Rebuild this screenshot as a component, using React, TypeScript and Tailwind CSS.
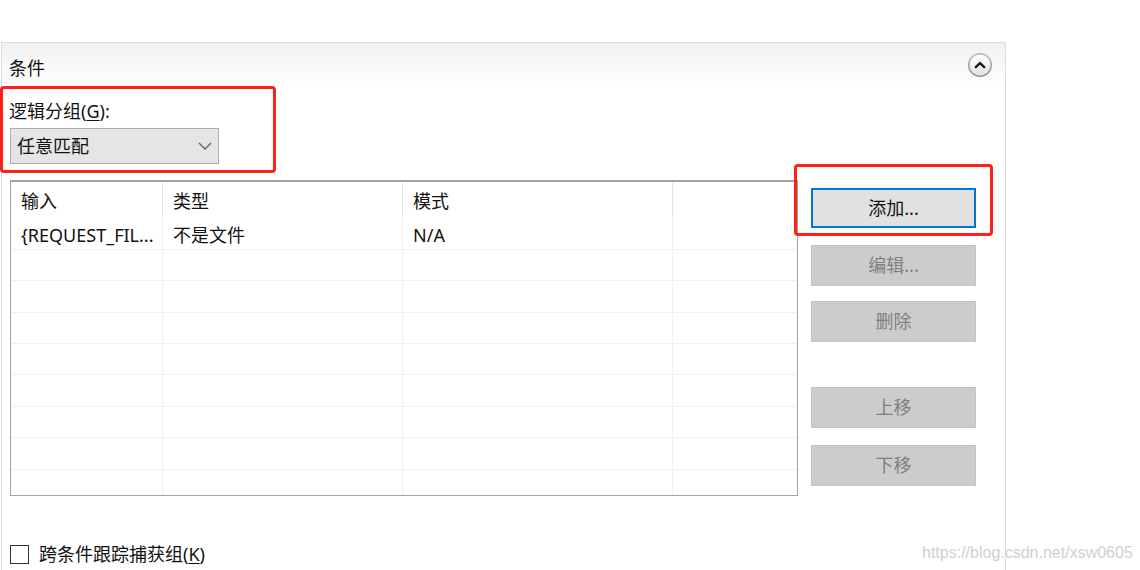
import React from "react";

const font = {
  fontFamily: '"Noto Sans", "Noto Sans CJK SC", sans-serif',
};

const rowHeights = [31, 32, 31, 31, 32, 31, 32];

const columns = [
  "w-[152px]",
  "w-[240px]",
  "w-[270px]",
  "flex-1",
];

function CollapseButton() {
  return (
    <svg width="26" height="26" viewBox="0 0 26 26">
      <defs>
        <linearGradient id="ring" x1="0" y1="0" x2="0" y2="1">
          <stop offset="0" stopColor="#b9b9b9" />
          <stop offset="1" stopColor="#8f8f8f" />
        </linearGradient>
        <linearGradient id="face" x1="0" y1="0" x2="0" y2="1">
          <stop offset="0" stopColor="#ffffff" />
          <stop offset="1" stopColor="#e2e2e2" />
        </linearGradient>
      </defs>
      <circle cx="13" cy="13" r="12" fill="url(#ring)" />
      <circle cx="13" cy="13" r="10.5" fill="url(#face)" />
      <path d="M8.8 15.2 L13 11 L17.2 15.2" fill="none" stroke="#1a1a1a" strokeWidth="2.4" strokeLinecap="round" strokeLinejoin="round" />
    </svg>
  );
}

function SideButton({ label, active }: { label: string; active?: boolean }) {
  return (
    <div
      className={
        active
          ? "flex h-[40px] w-[165px] items-center justify-center border-2 border-[#0078d7] bg-[#e1e1e1] text-[18px] text-[#111]"
          : "flex h-[41px] w-[165px] items-center justify-center border border-[#c4c4c4] bg-[#cccccc] text-[18px] text-[#7f7f7f]"
      }
    >
      {label}
    </div>
  );
}

export default function App() {
  return (
    <div className="relative h-[570px] w-[1140px] overflow-hidden bg-white pl-px pt-[42px] text-[#111]" style={font}>
      <div className="flex h-[530px] w-[1005px] flex-col border border-b-0 border-[#dcdcdc]">
        <div className="flex h-[47px] items-start justify-between bg-gradient-to-b from-[#f1f1f1] to-white pl-[7px] pr-[12px]">
          <span className="mt-[14px] text-[18px] leading-[22px]">条件</span>
          <div className="mt-[9px]">
            <CollapseButton />
          </div>
        </div>

        <div className="mt-[11px] pl-[7px] text-[18px] leading-[20px]">
          逻辑分组(<span className="underline underline-offset-2">G</span>):
        </div>
        <div className="ml-[8px] mt-[7px] flex h-[36px] w-[209px] items-center justify-between border border-[#adadad] bg-[#e5e5e5] pl-[6px] pr-[6px]">
          <span className="text-[18px]">任意匹配</span>
          <svg width="14" height="8" viewBox="0 0 14 8">
            <path d="M1 1 L7 7 L13 1" fill="none" stroke="#606060" strokeWidth="1.3" />
          </svg>
        </div>

        <div className="ml-[8px] mt-[16px] flex items-start gap-[13px]">
          <div className="flex h-[316px] w-[788px] flex-col overflow-hidden border border-t-2 border-[#a3a3a3] bg-white">
            <div className="flex h-[36px] text-[18px]">
              {["输入", "类型", "模式", ""].map((h, i) => (
                <div key={i} className={`${columns[i]} flex items-center border-r border-[#e5e5e5] pl-[10px] pt-[2px] last:border-r-0`}>
                  {h}
                </div>
              ))}
            </div>
            <div className="flex h-[32px] border-b border-[#f0f0f0] text-[18px]">
              {["{REQUEST_FIL...", "不是文件", "N/A", ""].map((c, i) => (
                <div key={i} className={`${columns[i]} flex items-center whitespace-nowrap border-r border-[#f0f0f0] pl-[10px] pt-[3px] last:border-r-0`}>
                  {c}
                </div>
              ))}
            </div>
            {rowHeights.map((h, r) => (
              <div key={r} className="flex shrink-0 border-b border-[#f0f0f0]" style={{ height: h }}>
                {columns.map((c, i) => (
                  <div key={i} className={`${c} border-r border-[#f0f0f0] last:border-r-0`} />
                ))}
              </div>
            ))}
            <div className="flex flex-1">
              {columns.map((c, i) => (
                <div key={i} className={`${c} border-r border-[#f0f0f0] last:border-r-0`} />
              ))}
            </div>
          </div>

          <div className="mt-[8px] flex flex-col">
            <SideButton label="添加..." active />
            <div className="mt-[17px]">
              <SideButton label="编辑..." />
            </div>
            <div className="mt-[15px]">
              <SideButton label="删除" />
            </div>
            <div className="mt-[45px]">
              <SideButton label="上移" />
            </div>
            <div className="mt-[17px]">
              <SideButton label="下移" />
            </div>
          </div>
        </div>

        <div className="ml-[8px] mt-[48px] flex items-center gap-[10px]">
          <div className="h-[19px] w-[19px] border border-[#333] bg-white" />
          <span className="text-[18px] leading-[20px]">
            跨条件跟踪捕获组(<span className="underline underline-offset-2">K</span>)
          </span>
        </div>
      </div>

      <div className="pointer-events-none absolute left-0 top-[86px] h-[87px] w-[276px] rounded-[4px] border-[3px] border-[#ff1f17]" />
      <div className="pointer-events-none absolute left-[794px] top-[164px] h-[72px] w-[199px] rounded-[4px] border-[3px] border-[#ff1f17]" />

      <div
        className="absolute left-[922px] top-[543px] text-[16px] leading-[20px] text-[#cfcfcf]"
        style={{ fontFamily: '"Liberation Sans", Arial, sans-serif' }}
      >
        https://blog.csdn.net/xsw0605
      </div>
    </div>
  );
}
